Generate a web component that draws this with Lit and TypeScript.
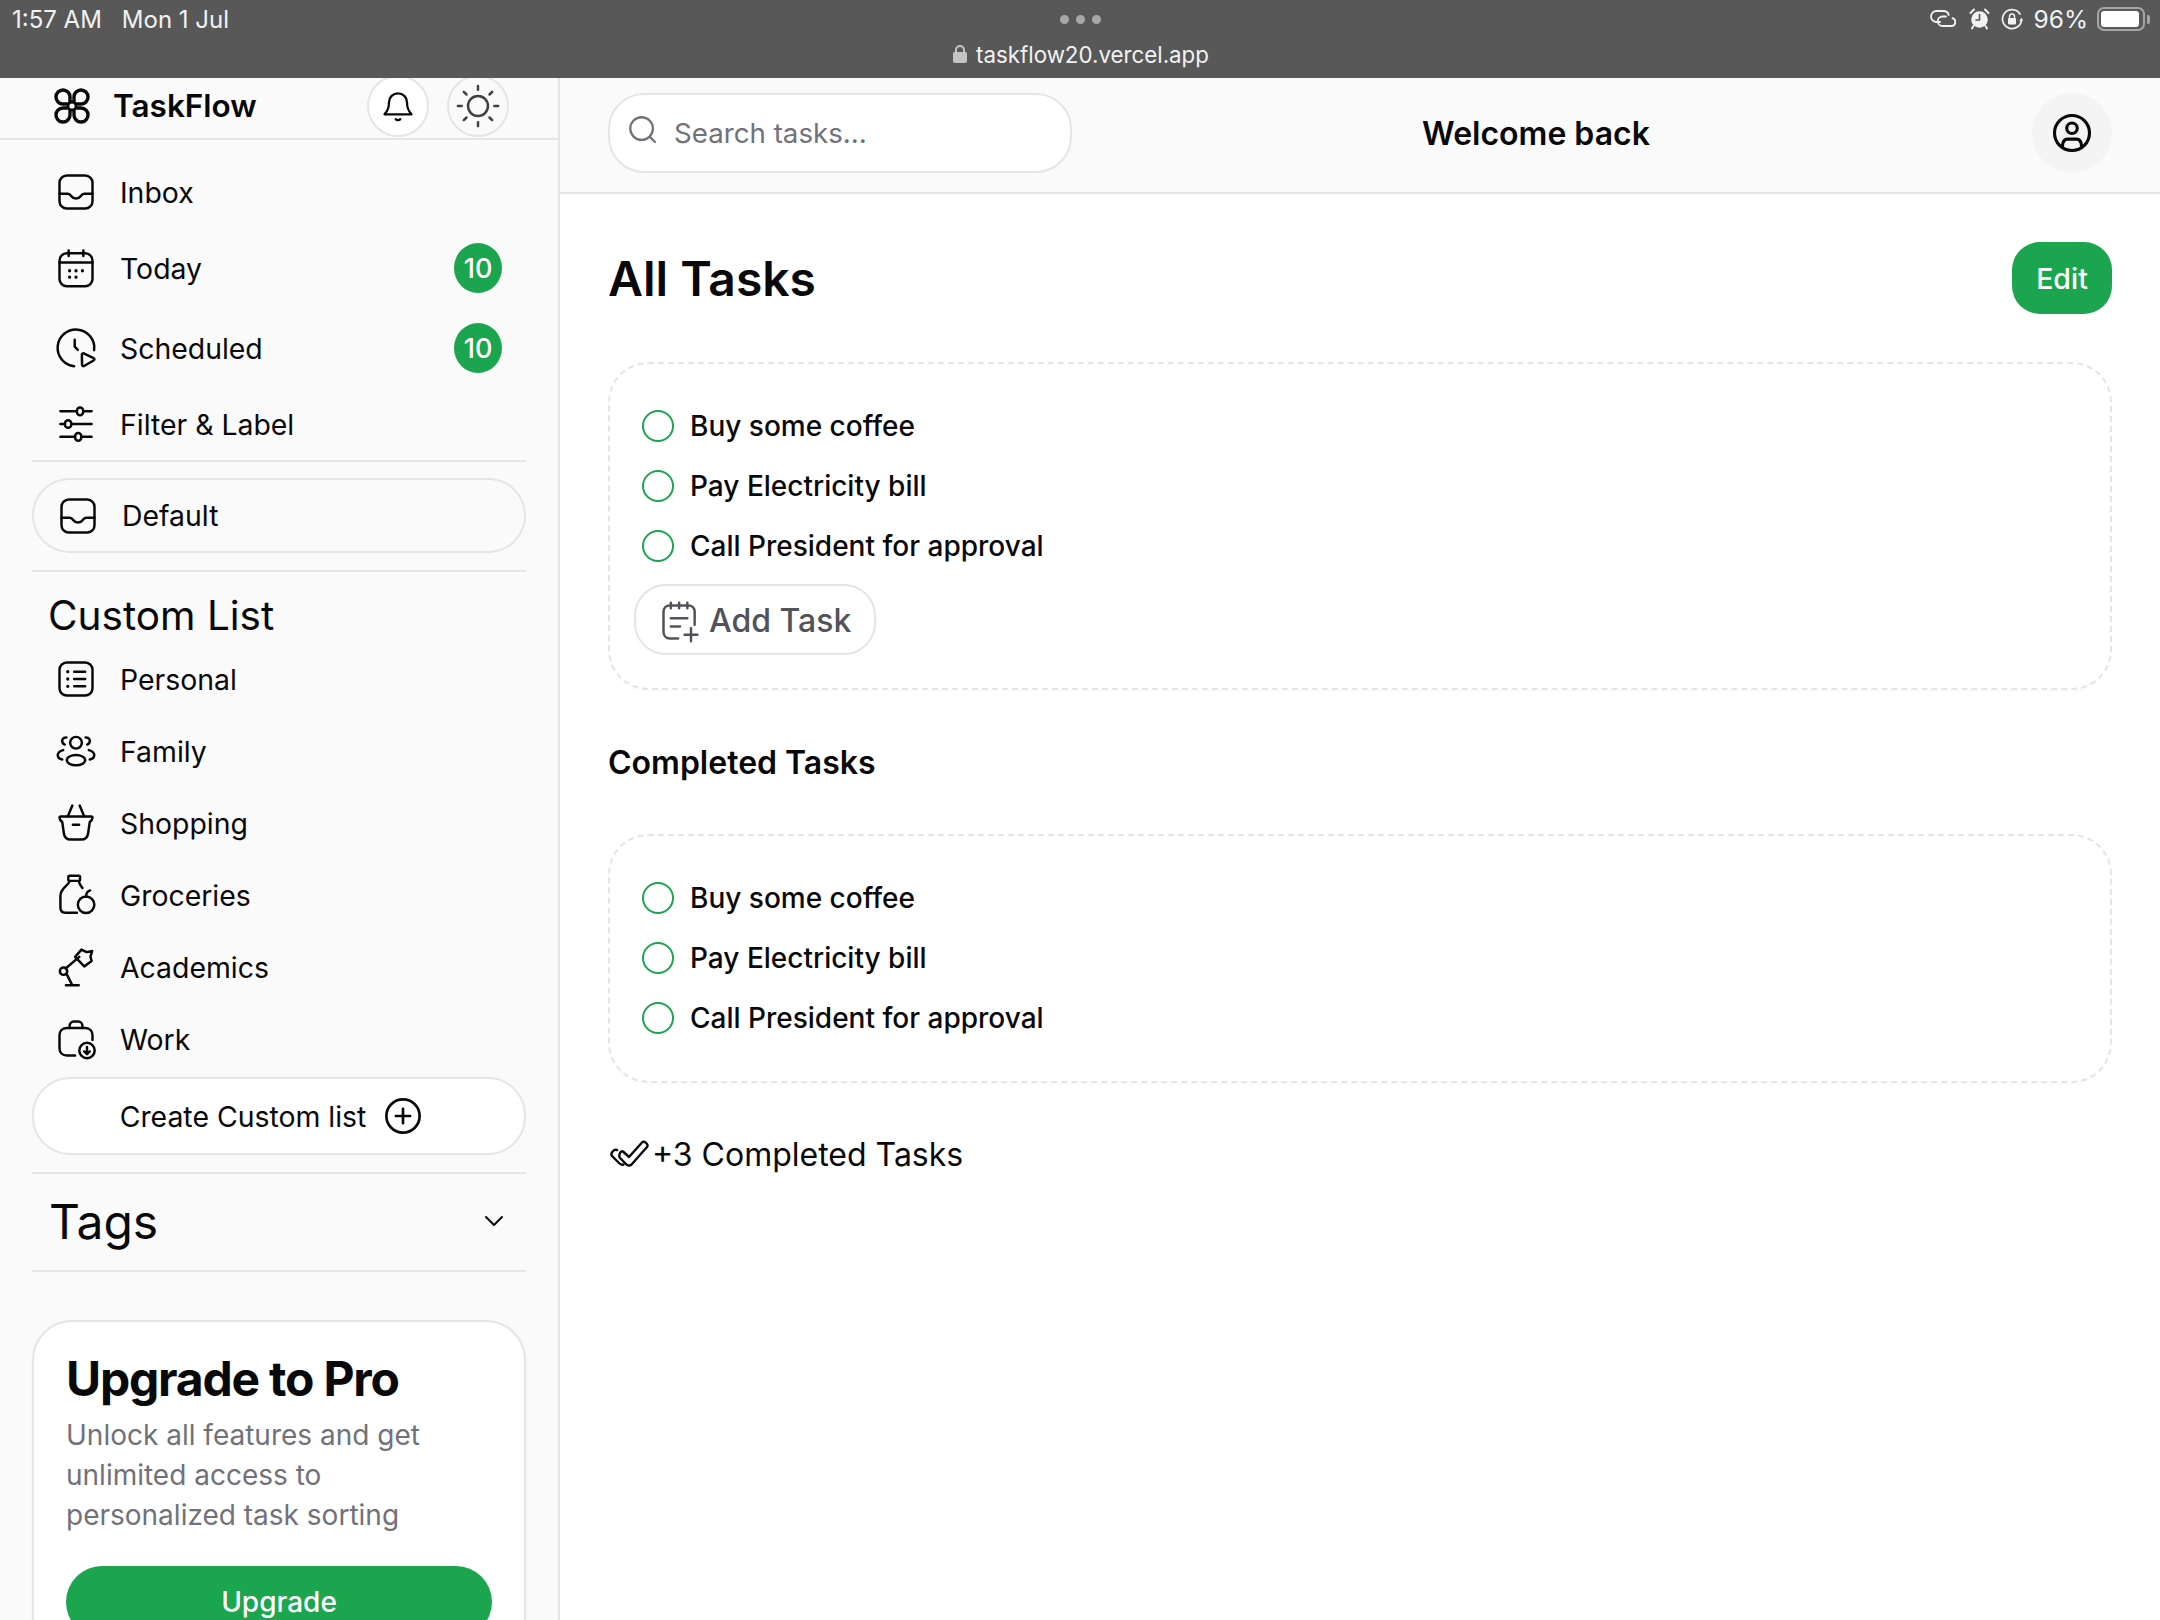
import { LitElement, html, css, svg } from 'lit';
import { customElement } from 'lit/decorators.js';

const icons = {
  inbox: svg`<rect x="3" y="3" width="18" height="18" rx="4"/><path d="M3 13h4.500c1 0 1.500.6 2 1.300.6.9 1.400 1.200 2.500 1.200s1.900-.3 2.500-1.200c.5-.7 1-1.300 2-1.300H21"/>`,
  calendar: svg`<rect x="3" y="4" width="18" height="18" rx="4"/><path d="M3 9h18M8 2.500v3M16 2.500v3"/><path class="dots" d="M8.500 13.500h.01M12 13.500h.01M15.500 13.500h.01M8.500 17h.01M12 17h.01"/>`,
  clock: svg`<path d="M21.900 13.200A10 10 0 1 0 11 21.900"/><path d="M11.300 7.500v3.800l1.700 1.700"/><path d="M15.200 15.600c0-.6.5-.9 1-.7l5.400 2.600c.6.3.6 1 0 1.300l-5.200 3c-.6.3-1.100 0-1.100-.6z"/>`,
  filter: svg`<path d="M3.500 5h9M16 5h4.500M3.500 12h2.500M9.500 12h11M3.500 19h8M15 19h5.500"/><rect x="12.500" y="3" width="3.400" height="4.200" rx="1.700"/><rect x="6" y="9.900" width="3.400" height="4.200" rx="1.700"/><rect x="11.500" y="16.900" width="3.400" height="4.200" rx="1.700"/>`,
  list: svg`<rect x="3" y="3" width="18" height="18" rx="4"/><path d="M11 8h6M11 12h6M11 16h6"/><path class="dots" d="M7.500 8h.01M7.500 12h.01M7.500 16h.01"/>`,
  family: svg`<circle cx="12" cy="7.500" r="3.200"/><ellipse cx="12" cy="17" rx="5" ry="2.800"/><path d="M6.800 4.600C5 4.400 3.900 6 4.700 7.500c.3.5.7.8 1.200 1M17.200 4.600c1.800-.2 2.900 1.400 2.100 2.900-.3.5-.7.8-1.200 1M5 11.500c-1.900.5-3.200 1.800-2.900 3.300.2.9 1.100 1.500 2.400 1.800M19 11.500c1.900.5 3.200 1.800 2.900 3.300-.2.9-1.100 1.500-2.400 1.800"/>`,
  basket: svg`<path d="M3 9.200c0-.4.3-.7.7-.7h16.600c.4 0 .7.3.7.7 0 1.100-.8 1.800-1.500 2.300l-.9 6.200c-.3 2-1.700 3.300-3.700 3.300H9.100c-2 0-3.400-1.300-3.700-3.300l-.9-6.200C3.800 11 3 10.300 3 9.200z"/><path d="M10 2.500 7.500 8.500M14 2.500l2.500 6M10.300 13h3.400"/>`,
  groceries: svg`<path d="M7.800 2.200c0-.4.3-.7.7-.7h5c.4 0 .7.300.7.700v1.400c0 .4-.3.7-.7.7h-5c-.4 0-.7-.3-.7-.7zM8.500 4.300C8 7 3.500 8 3.500 12.500v6.500c0 1.700 1 2.700 2.700 2.700h6.300M13.500 4.300c.2 1.800 1.200 2.800 2 3.900"/><circle cx="17.500" cy="17.300" r="4.500"/><path d="M17.500 12.800c0-1.500.8-2.800 2.200-3.300"/>`,
  lamp: svg`<path d="M6.500 22h7M10 22 6.800 15.600M6.300 12.800l7.500-6.300"/><circle cx="5.200" cy="14.300" r="2"/><path d="M11.500 6.500 15 2.500l2.800 1.400 3-.6-.9 3 .6 2.400-4 3z"/>`,
  work: svg`<path d="M11.500 21H7c-2.400 0-4-1.600-4-4v-7c0-2.400 1.600-4 4-4h10c2.400 0 4 1.600 4 4v2.500"/><path d="M8.500 6V4.800c0-1.300 1-2.300 2.300-2.300h2.400c1.300 0 2.300 1 2.300 2.300V6"/><circle cx="18" cy="18.300" r="4.200"/><path d="M18 16.300v3.800M16.500 18.800l1.500 1.500 1.500-1.500"/>`,
};

type IconName = keyof typeof icons;

const topNav: { icon: IconName; label: string; badge?: string }[] = [
  { icon: 'inbox', label: 'Inbox' },
  { icon: 'calendar', label: 'Today', badge: '10' },
  { icon: 'clock', label: 'Scheduled', badge: '10' },
  { icon: 'filter', label: 'Filter & Label' },
];

const customNav: { icon: IconName; label: string }[] = [
  { icon: 'list', label: 'Personal' },
  { icon: 'family', label: 'Family' },
  { icon: 'basket', label: 'Shopping' },
  { icon: 'groceries', label: 'Groceries' },
  { icon: 'lamp', label: 'Academics' },
  { icon: 'work', label: 'Work' },
];

const tasks = ['Buy some coffee', 'Pay Electricity bill', 'Call President for approval'];

@customElement('app-root')
export class AppRoot extends LitElement {
  static styles = css`
    :host {
      display: block;
      width: 2160px;
      height: 1620px;
      overflow: hidden;
      font-family: Inter, 'Liberation Sans', sans-serif;
      color: #09090b;
      background: #fff;
    }

    svg {
      display: block;
      flex: none;
      fill: none;
      stroke: currentColor;
      stroke-width: 1.35;
      stroke-linecap: round;
      stroke-linejoin: round;
    }

    .dots {
      stroke-width: 1.8;
    }

    .status {
      position: relative;
      z-index: 2;
      height: 78px;
      background: #585858;
      color: #f2f2f2;
      display: grid;
      grid-template-columns: 1fr auto 1fr;
      padding: 0 10px 0 12px;
      font-size: 24px;
    }

    .status-left {
      display: flex;
      gap: 20px;
      height: 38px;
      align-items: center;
    }

    .status-mid {
      display: flex;
      flex-direction: column;
      align-items: center;
    }

    .status-dots {
      height: 38px;
      display: flex;
      align-items: center;
      gap: 7px;
    }

    .status-dots i {
      width: 9px;
      height: 9px;
      border-radius: 50%;
      background: #a8a8a8;
    }

    .url {
      display: flex;
      align-items: center;
      gap: 9px;
      height: 32px;
      font-size: 22.3px;
    }

    .status-right {
      display: flex;
      justify-content: flex-end;
      align-items: center;
      height: 38px;
      gap: 11px;
    }

    .pct {
      margin-right: -2px;
      font-size: 24.5px;
    }

    .battery {
      display: flex;
      align-items: center;
      gap: 2px;
    }

    .battery-body {
      width: 48px;
      height: 24px;
      box-sizing: border-box;
      border: 2px solid #a5a5a5;
      border-radius: 7px;
      padding: 2px;
    }

    .battery-fill {
      width: 38px;
      height: 16px;
      background: #fff;
      border-radius: 3px;
    }

    .battery-tip {
      width: 3px;
      height: 9px;
      background: #a5a5a5;
      border-radius: 0 2px 2px 0;
    }

    .page {
      display: grid;
      grid-template-columns: 560px 1fr;
      height: 1542px;
    }

    .side {
      background: #fafafa;
      border-right: 2px solid #e5e5e5;
      box-sizing: border-box;
      overflow: hidden;
    }

    .brand {
      height: 62px;
      box-sizing: border-box;
      border-bottom: 2px solid #e5e5e5;
      display: flex;
      align-items: center;
      padding: 0 0 5px 52px;
    }

    .logo {
      width: 40px;
      height: 40px;
    }

    .logo-hub {
      fill: #fafafa;
    }

    .brand-name {
      font-size: 31.5px;
      font-weight: 600;
      margin-left: 21px;
      flex: 1;
    }

    .round {
      width: 62px;
      height: 62px;
      box-sizing: border-box;
      border-radius: 50%;
      border: 2px solid #e5e5e5;
      background: #fff;
      display: flex;
      align-items: center;
      justify-content: center;
      flex: none;
    }

    .round.bell {
      margin-right: 18px;
    }

    .round.sun {
      margin-right: 49px;
      color: #404040;
      background: #fafafa;
    }

    .group {
      margin: 0 32px;
    }

    .top-group {
      padding-top: 16px;
      border-bottom: 2px solid #e5e5e5;
    }

    .row {
      height: 72px;
      display: flex;
      align-items: center;
      gap: 22px;
      padding: 0 24px 0 22px;
      font-size: 28.4px;
    }

    .row.has-badge {
      height: 80px;
    }

    .row .label {
      flex: 1;
    }

    .badge {
      width: 48px;
      height: 50px;
      border-radius: 50%;
      background: #1aa54e;
      color: #fff;
      font-size: 27px;
      font-weight: 500;
      display: flex;
      align-items: center;
      justify-content: center;
    }

    .default-pill {
      margin: 16px 32px 17px;
      height: 75px;
      box-sizing: border-box;
      border: 2px solid #e5e5e5;
      border-radius: 38px;
      display: flex;
      align-items: center;
      gap: 22px;
      padding-left: 22px;
      font-size: 28.4px;
    }

    .rule {
      height: 2px;
      margin: 0 32px;
      background: #e5e5e5;
    }

    .side-title {
      margin: 20px 48px 3px;
      font-size: 40.5px;
      line-height: 48px;
      font-weight: 400;
    }

    .create {
      margin: 2px 32px 17px;
      height: 78px;
      box-sizing: border-box;
      border: 2px solid #e5e5e5;
      border-radius: 38px;
      background: #fff;
      display: flex;
      align-items: center;
      justify-content: center;
      gap: 18px;
      padding-right: 16px;
      font-size: 28.4px;
    }

    .tags {
      margin: 0 32px;
      height: 98px;
      box-sizing: border-box;
      border-bottom: 2px solid #e5e5e5;
      display: flex;
      align-items: center;
      justify-content: space-between;
      padding: 0 20px 2px 17px;
      font-size: 48px;
    }

    .pro {
      margin: 48px 32px 0;
      border: 2px solid #e5e5e5;
      border-radius: 40px;
      background: #fff;
      padding: 29px 32px 40px;
      box-shadow: 0 1px 3px rgba(0, 0, 0, 0.05);
    }

    .pro h2 {
      margin: 0 0 8px;
      font-size: 48px;
      line-height: 56px;
      font-weight: 700;
      letter-spacing: -0.025em;
    }

    .pro p {
      margin: 0 0 31px;
      font-size: 28px;
      line-height: 40px;
      color: #71717a;
    }

    .pro-btn {
      height: 72px;
      border-radius: 36px;
      background: #1aa54e;
      color: #fff;
      font-size: 28px;
      font-weight: 500;
      display: flex;
      align-items: center;
      justify-content: center;
    }

    .main {
      min-width: 0;
    }

    .bar {
      height: 116px;
      box-sizing: border-box;
      background: #fafafa;
      border-bottom: 2px solid #e5e5e5;
      padding: 0 48px 5px;
      display: flex;
      align-items: center;
      justify-content: space-between;
    }

    .search {
      width: 464px;
      height: 80px;
      box-sizing: border-box;
      border: 2px solid #e5e5e5;
      border-radius: 36px;
      background: #fff;
      display: flex;
      align-items: center;
      gap: 14px;
      padding-left: 16px;
      color: #71717a;
      font-size: 27.7px;
    }

    .search svg {
      margin-top: -5px;
    }

    .welcome {
      font-size: 32px;
      font-weight: 600;
      margin: 2px 32px 0 0;
    }

    .avatar {
      width: 80px;
      height: 80px;
      margin-top: 1px;
      border-radius: 50%;
      background: #f4f4f5;
      display: flex;
      align-items: center;
      justify-content: center;
    }

    .content {
      padding: 48px 48px 0;
    }

    .title-row {
      display: flex;
      justify-content: space-between;
      align-items: center;
    }

    .title-row h1 {
      margin: 0;
      font-size: 48px;
      font-weight: 600;
    }

    .edit {
      width: 100px;
      height: 72px;
      border-radius: 28px;
      background: #1aa54e;
      color: #fff;
      font-size: 28.5px;
      font-weight: 500;
      display: flex;
      align-items: center;
      justify-content: center;
    }

    .card {
      margin-top: 48px;
      border: 2px dashed #e5e5e5;
      border-radius: 40px;
      padding: 32px 24px 33px;
      box-shadow: 0 1px 2px rgba(0, 0, 0, 0.03);
    }

    .task {
      height: 60px;
      display: flex;
      align-items: center;
      gap: 16px;
      padding-left: 8px;
      font-size: 28px;
      font-weight: 500;
    }

    .check {
      width: 32px;
      height: 32px;
      box-sizing: border-box;
      border: 2px solid #1aa54e;
      border-radius: 50%;
    }

    .add {
      margin-top: 8px;
      width: 242px;
      height: 71px;
      box-sizing: border-box;
      border: 2px solid #e5e5e5;
      border-radius: 32px;
      display: flex;
      align-items: center;
      gap: 7px;
      padding: 2px 0 0 22px;
      color: #52525b;
      font-size: 32px;
      font-weight: 500;
    }

    h3 {
      margin: 53px 0 51px;
      font-size: 32px;
      line-height: 40px;
      font-weight: 600;
    }

    .card.done {
      margin-top: 0;
    }

    .more {
      margin-top: 49px;
      height: 44px;
      display: flex;
      align-items: center;
      gap: 2px;
      padding-left: 2px;
      font-size: 32px;
    }
  `;

  private icon(name: IconName, size = 44) {
    return html`<svg width=${size} height=${size} viewBox="0 0 24 24">${icons[name]}</svg>`;
  }

  private taskRows() {
    return tasks.map(t => html`<div class="task"><span class="check"></span>${t}</div>`);
  }

  private statusBar() {
    return html`
      <div class="status">
        <div class="status-left"><span>1:57 AM</span><span>Mon 1 Jul</span></div>
        <div class="status-mid">
          <div class="status-dots"><i></i><i></i><i></i></div>
          <div class="url">
            <svg width="14" height="18" viewBox="0 0 14 18" style="stroke:none">
              <path fill="#c4c4c4" d="M2 7V5a5 5 0 0 1 10 0v2h.5c.8 0 1.500.7 1.500 1.500V16c0 1-.8 2-2 2H2c-1.200 0-2-1-2-2V8.500C0 7.700.7 7 1.500 7zm2 0h6V5a3 3 0 0 0-6 0z"/>
            </svg>
            taskflow20.vercel.app
          </div>
        </div>
        <div class="status-right">
          <svg width="28" height="18" viewBox="0 0 28 18" style="stroke-width:1.800">
            <path d="M10 12H6.500a5.500 5.500 0 0 1 0-11h7a5.500 5.500 0 0 1 5.300 4"/>
            <path d="M16 6.500h-3.500a4.700 4.700 0 0 0 0 9.500h9a4 4 0 0 0 1-7.800"/>
          </svg>
          <svg width="21" height="22" viewBox="0 0 21 22">
            <circle cx="10.500" cy="11.500" r="8.300" fill="#f2f2f2" stroke="none"/>
            <path d="M1.500 5 5 1.500M19.500 5 16 1.500M4.500 18 3 20.500M16.500 18l1.500 2.500" stroke-width="2"/>
            <path d="M10.500 6.500v5.500H7" stroke="#585858" stroke-width="1.600"/>
          </svg>
          <svg width="22" height="22" viewBox="0 0 22 22" style="stroke-width:1.700">
            <path d="M19 6A9.500 9.500 0 1 0 20.500 11"/>
            <path d="M20.500 10.500 22 13l-4-.5z" fill="#f2f2f2" stroke="none"/>
            <rect x="7" y="10" width="8" height="6.500" rx="1" fill="#f2f2f2" stroke="none"/>
            <path d="M8.500 10V8.500a2.500 2.500 0 0 1 5 0V10" stroke-width="1.400"/>
          </svg>
          <span class="pct">96%</span>
          <div class="battery">
            <div class="battery-body"><div class="battery-fill"></div></div>
            <div class="battery-tip"></div>
          </div>
        </div>
      </div>
    `;
  }

  private sidebar() {
    return html`
      <aside class="side">
        <div class="brand">
          <svg class="logo" viewBox="0 0 40 40" style="stroke-width:3.400">
            <path d="M18 18V11A7 7 0 1 0 11 18z"/>
            <path d="M22 18V11A7 7 0 1 1 29 18z"/>
            <path d="M18 22V29A7 7 0 1 1 11 22z"/>
            <path d="M22 22V29A7 7 0 1 0 29 22z"/>
            <circle class="logo-hub" cx="20" cy="20" r="4" style="stroke-width:2.800"/>
          </svg>
          <span class="brand-name">TaskFlow</span>
          <div class="round bell">
            <svg width="36" height="38" viewBox="0 0 24 24" style="stroke-width:1.500">
              <path d="M6 9.500a6 6 0 0 1 12 0c0 4.500 1.500 6.500 3 8H3c1.500-1.500 3-3.500 3-8z"/>
              <path d="M10.500 20.800c.6.8 2.400.8 3 0"/>
            </svg>
          </div>
          <div class="round sun">
            <svg width="46" height="46" viewBox="0 0 24 24" style="stroke-width:1.300">
              <circle cx="12" cy="12" r="5.200"/>
              <path d="M12 1.500v2M12 20.500v2M1.500 12h2M20.500 12h2M4.600 4.600 6 6M18 18l1.400 1.400M4.600 19.400 6 18M18 6l1.400-1.400"/>
            </svg>
          </div>
        </div>

        <nav class="group top-group">
          ${topNav.map(n => html`
            <div class="row ${n.badge ? 'has-badge' : ''}">
              ${this.icon(n.icon)}
              <span class="label">${n.label}</span>
              ${n.badge ? html`<span class="badge">${n.badge}</span>` : ''}
            </div>
          `)}
        </nav>

        <div class="default-pill">${this.icon('inbox')}Default</div>
        <div class="rule"></div>

        <div class="side-title">Custom List</div>
        <nav class="group">
          ${customNav.map(n => html`
            <div class="row">${this.icon(n.icon)}<span class="label">${n.label}</span></div>
          `)}
        </nav>

        <div class="create">
          Create Custom list
          <svg width="38" height="38" viewBox="0 0 24 24" style="stroke-width:1.700">
            <circle cx="12" cy="12" r="10.500"/>
            <path d="M12 7.500v9M7.500 12h9"/>
          </svg>
        </div>
        <div class="rule"></div>

        <div class="tags">
          <span>Tags</span>
          <svg width="24" height="24" viewBox="0 0 24 24" style="stroke-width:2">
            <path d="M4 8l8 8 8-8"/>
          </svg>
        </div>

        <div class="pro">
          <h2>Upgrade to Pro</h2>
          <p>Unlock all features and get<br />unlimited access to<br />personalized task sorting</p>
          <div class="pro-btn">Upgrade</div>
        </div>
      </aside>
    `;
  }

  render() {
    return html`
      ${this.statusBar()}
      <div class="page">
        ${this.sidebar()}
        <main class="main">
          <header class="bar">
            <div class="search">
              <svg width="34" height="34" viewBox="0 0 24 24" style="stroke-width:1.600">
                <circle cx="11" cy="11" r="8"/><path d="m20.500 20.500-3.800-3.800"/>
              </svg>
              <span>Search tasks...</span>
            </div>
            <div class="welcome">Welcome back</div>
            <div class="avatar">
              <svg width="42" height="42" viewBox="0 0 24 24" style="stroke-width:1.800">
                <circle cx="12" cy="12" r="10"/>
                <circle cx="12" cy="9.300" r="3"/>
                <path d="M6.500 19.500c.2-2.700 1.300-4 3-4h5c1.700 0 2.800 1.300 3 4"/>
              </svg>
            </div>
          </header>

          <section class="content">
            <div class="title-row">
              <h1>All Tasks</h1>
              <div class="edit">Edit</div>
            </div>

            <div class="card">
              ${this.taskRows()}
              <div class="add">
                <svg width="44" height="44" viewBox="0 0 24 24">
                  <path d="M11 21.500H6.500c-2 0-3.500-1.500-3.500-3.500V7c0-2 1.500-3.500 3.500-3.500h10C18.500 3.500 20 5 20 7v7"/>
                  <path d="M7 2v3M11.500 2v3M16 2v3M7 10.500h9M7 15h5M18 16v7M14.500 19.500h7"/>
                </svg>
                Add Task
              </div>
            </div>

            <h3>Completed Tasks</h3>

            <div class="card done">${this.taskRows()}</div>

            <div class="more">
              <svg width="40" height="28" viewBox="0 0 40 28" style="stroke-width:2.400">
                <path d="M13 11.500 19 17 32 2.500c2-2 7 1.500 5 4.500L22 24c-1.500 2-4 2-5.500.5L10 18c-2-3 1-8 3-6.500z"/>
                <path d="M7 10c-3-1-7 3-5 6l7 7c1.500 1.500 3 2 4.500 1.500"/>
              </svg>
              +3 Completed Tasks
            </div>
          </section>
        </main>
      </div>
    `;
  }
}
